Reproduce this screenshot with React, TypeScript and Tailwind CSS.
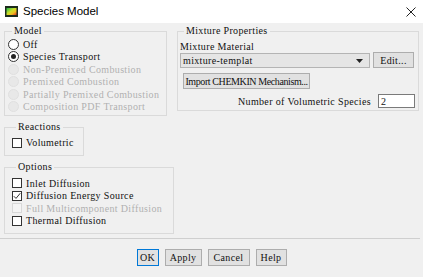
import React from "react";

const Radio = ({ state }: { state: "on" | "off" | "dis" }) => {
  if (state === "dis")
    return <span className="w-[11px] h-[11px] rounded-full bg-[#e8e8e8] border border-[#e0e0e0] shrink-0" />;
  return (
    <span className="w-[11px] h-[11px] rounded-full bg-white border border-[#333] shrink-0 flex items-center justify-center">
      {state === "on" && <span className="w-[5px] h-[5px] rounded-full bg-[#222]" />}
    </span>
  );
};

const Check = ({ state }: { state: "on" | "off" | "dis" }) => {
  if (state === "dis") return <span className="w-[10px] h-[10px] bg-[#f4f4f4] border border-[#d8d8d8] shrink-0" />;
  return (
    <span className="w-[10px] h-[10px] bg-white border border-[#333] shrink-0 flex items-center justify-center">
      {state === "on" && (
        <svg width="8" height="8" viewBox="0 0 8 8">
          <path d="M0.8 4.2 L3 6.4 L7.3 1.2" fill="none" stroke="#333" strokeWidth="1" />
        </svg>
      )}
    </span>
  );
};

const Legend = ({ children }: { children: React.ReactNode }) => (
  <legend className="ml-[4px] px-[2px] leading-[12px] text-[#111]">{children}</legend>
);

export default function App() {
  const radios: [string, "on" | "off" | "dis"][] = [
    ["Off", "off"],
    ["Species Transport", "on"],
    ["Non-Premixed Combustion", "dis"],
    ["Premixed Combustion", "dis"],
    ["Partially Premixed Combustion", "dis"],
    ["Composition PDF Transport", "dis"],
  ];
  const opts: [string, "on" | "off" | "dis"][] = [
    ["Inlet Diffusion", "off"],
    ["Diffusion Energy Source", "on"],
    ["Full Multicomponent Diffusion", "dis"],
    ["Thermal Diffusion", "off"],
  ];
  return (
    <div className="w-[423px] h-[277px] bg-[#f0f0f0] flex flex-col overflow-hidden font-[family-name:'Liberation_Serif',serif] text-[10px] tracking-[0.35px] text-[#111] whitespace-nowrap">
      <div className="h-[23px] bg-white flex items-center shrink-0">
        <svg width="13" height="11" viewBox="0 0 13 11" className="ml-[5px]">
          <defs>
            <linearGradient id="g" x1="0" y1="0" x2="1" y2="1">
              <stop offset="0" stopColor="#1db84a" />
              <stop offset="0.45" stopColor="#c9e02a" />
              <stop offset="0.7" stopColor="#f0c020" />
              <stop offset="1" stopColor="#d83020" />
            </linearGradient>
          </defs>
          <rect x="0" y="0" width="13" height="11" fill="#1b2a1b" />
          <rect x="1.5" y="2" width="10" height="7" fill="url(#g)" />
        </svg>
        <span className="ml-[5px] font-[family-name:'Liberation_Sans',sans-serif] text-[11.5px] tracking-normal text-black">Species Model</span>
        <svg width="10" height="10" viewBox="0 0 10 10" className="ml-auto mr-[7px]">
          <path d="M0.5 0.5 L9.5 9.5 M9.5 0.5 L0.5 9.5" stroke="#222" strokeWidth="1" />
        </svg>
      </div>
      <div className="flex px-[4px] pt-[2px] gap-[3px]">
        <div className="w-[170px] flex flex-col">
          <fieldset className="w-[163px] border border-[#dadada] pl-[3px] pt-[1px] pb-[2px]">
            <Legend>Model</Legend>
            {radios.map(([t, s]) => (
              <div key={t} className="h-[12.5px] flex items-center gap-[4px]">
                <Radio state={s} />
                <span className={s === "dis" ? "text-[#b0b0b0]" : ""}>{t}</span>
              </div>
            ))}
          </fieldset>
          <fieldset className="w-[80px] mt-[5px] border border-[#dadada] pl-[7px] pt-[3px] pb-[6px]">
            <Legend>Reactions</Legend>
            <div className="h-[13px] flex items-center gap-[4px]">
              <Check state="off" />
              <span>Volumetric</span>
            </div>
          </fieldset>
          <fieldset className="w-[170px] mt-[5px] border border-[#dadada] pl-[7px] pt-[4px] pb-[6px]">
            <Legend>Options</Legend>
            {opts.map(([t, s]) => (
              <div key={t} className="h-[12.5px] flex items-center gap-[4px]">
                <Check state={s} />
                <span className={s === "dis" ? "text-[#b0b0b0]" : ""}>{t}</span>
              </div>
            ))}
          </fieldset>
        </div>
        <fieldset className="w-[243px] self-start border border-[#dadada] pl-[2px] pr-[3px] pt-[3px] pb-[2px]">
          <Legend>Mixture Properties</Legend>
          <div className="h-[12px] flex items-center">Mixture Material</div>
          <div className="flex items-end gap-[3px]">
            <div className="w-[190px] h-[15px] bg-[#e5e5e5] border border-[#b4b4b4] flex items-center pl-[2px] pr-[6px]">
              <span>mixture-templat</span>
              <svg width="7" height="4" viewBox="0 0 7 4" className="ml-auto">
                <path d="M0 0 L7 0 L3.5 4 Z" fill="#222" />
              </svg>
            </div>
            <div className="w-[41px] h-[16px] bg-[#e1e1e1] border border-[#adadad] flex items-center justify-center">Edit...</div>
          </div>
          <div className="mt-[5px] ml-[3px] w-[127px] h-[16px] bg-[#e1e1e1] border border-[#adadad] flex items-center justify-center tracking-[-0.4px]">
            Import CHEMKIN Mechanism...
          </div>
          <div className="mt-[5px] h-[14px] flex items-center justify-end">
            <span>Number of Volumetric Species</span>
            <div className="ml-[7px] w-[37px] h-[14px] bg-white border border-[#7a7a7a] flex items-center pl-[2px]">2</div>
          </div>
        </fieldset>
      </div>
      <div className="mt-[4px] h-px bg-[#cfcfcf] mr-[3px]" />
      <div className="mt-[10px] flex justify-center gap-[6px]">
        <div className="w-[22px] h-[17px] bg-[#e1e1e1] border border-[#0078d7] flex items-center justify-center">OK</div>
        <div className="w-[37px] h-[17px] bg-[#e1e1e1] border border-[#adadad] flex items-center justify-center">Apply</div>
        <div className="w-[42px] h-[17px] bg-[#e1e1e1] border border-[#adadad] flex items-center justify-center">Cancel</div>
        <div className="w-[31px] h-[17px] bg-[#e1e1e1] border border-[#adadad] flex items-center justify-center">Help</div>
      </div>
    </div>
  );
}
